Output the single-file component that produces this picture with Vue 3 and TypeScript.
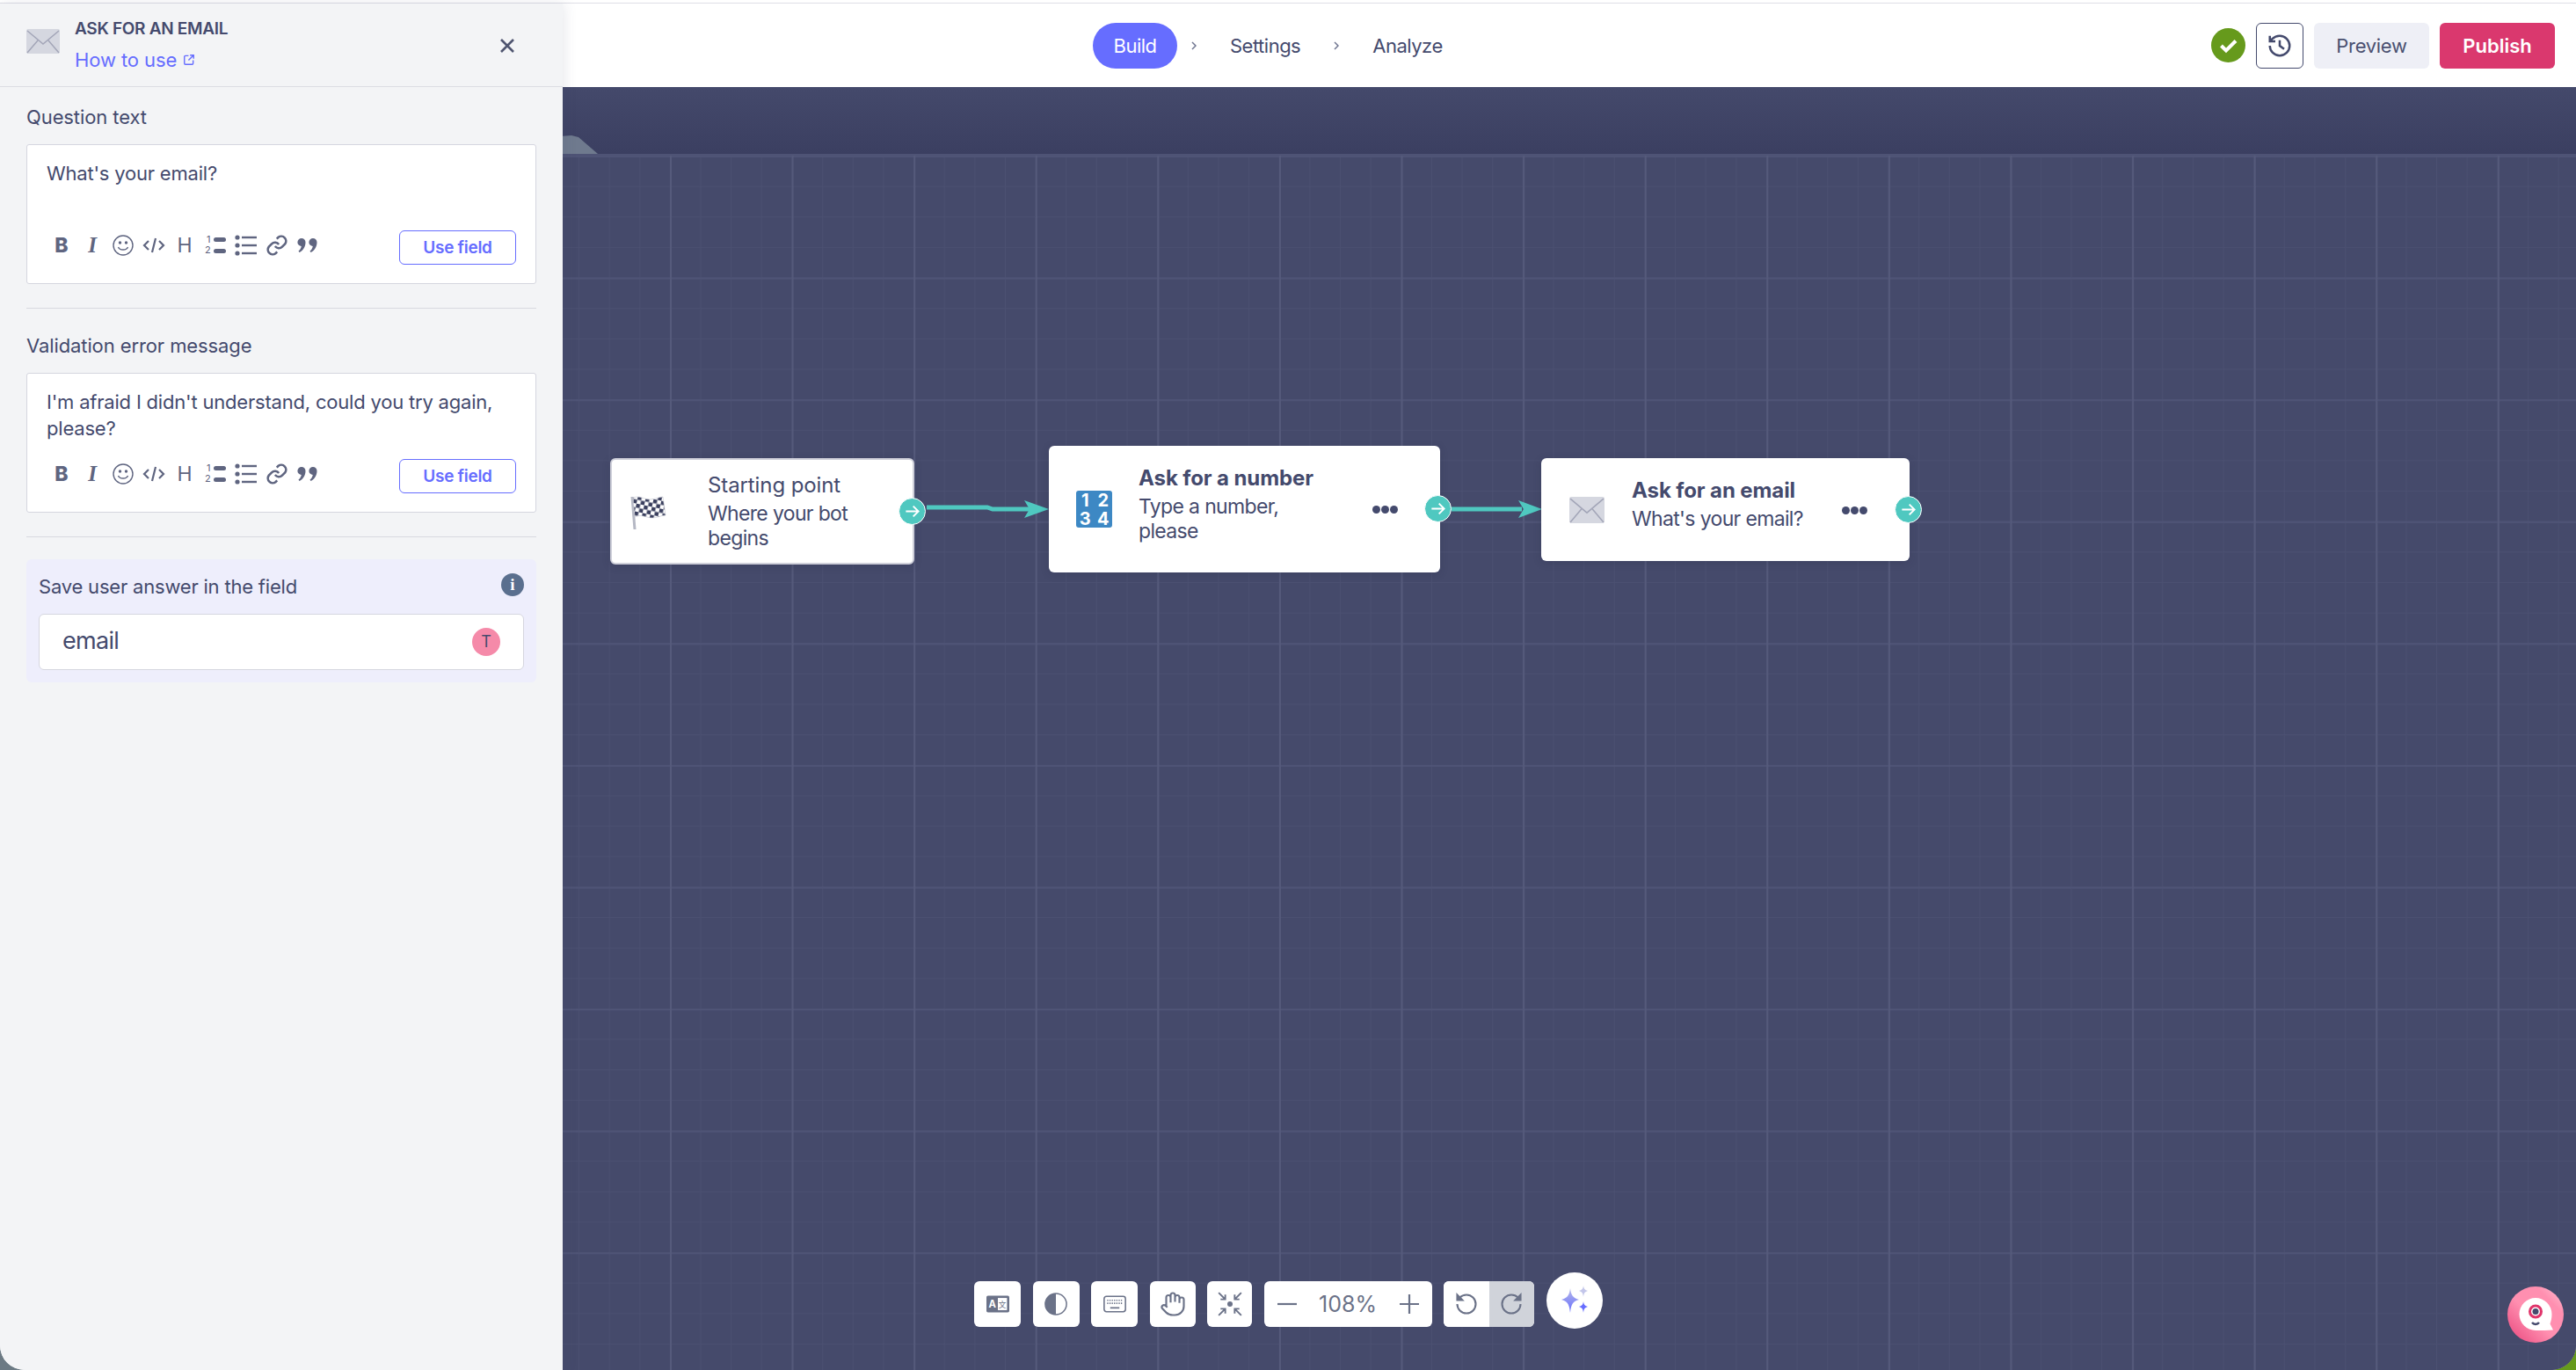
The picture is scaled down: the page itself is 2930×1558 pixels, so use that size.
<template>
  <div class="window">
    <div class="top-strip"></div>
    <div class="main">
      <aside class="panel">
        <header class="panel-head">
          <svg class="envelope" viewBox="0 0 38 28">
            <rect width="38" height="28" rx="2" fill="#d5d7e0" />
            <path d="M1 2l18 15L37 2M1 27l12-14M37 27L25 13" fill="none" stroke="#a3a6b8" stroke-width="1.5" />
          </svg>
          <div class="panel-titles">
            <div class="panel-title">ASK FOR AN EMAIL</div>
            <a class="how-to">How to use
              <svg class="ext" viewBox="0 0 24 24" fill="none" stroke="currentColor" stroke-width="2.4">
                <path d="M11 4H5a2 2 0 0 0-2 2v13a2 2 0 0 0 2 2h13a2 2 0 0 0 2-2v-6M14 3h7v7M21 3L11 13" />
              </svg>
            </a>
          </div>
          <svg class="close" viewBox="0 0 18 16" fill="none" stroke="#4f5570" stroke-width="2.6">
            <path d="M2 1l14 14M16 1L2 15" />
          </svg>
        </header>
        <div class="panel-body">
          <section v-for="ed in editors" :key="ed.label" class="field">
            <label class="field-label">{{ ed.label }}</label>
            <div class="editor">
              <div class="editor-text">{{ ed.text }}</div>
              <div class="editor-bar">
                <div class="fmt">
                  <span class="fmt-i fmt-b">B</span>
                  <span class="fmt-i fmt-it">I</span>
                  <svg class="fmt-i" viewBox="0 0 26 26" fill="none" stroke="#5f6580" stroke-width="1.4">
                    <circle cx="13" cy="13" r="11" />
                    <circle cx="9.5" cy="10" r="1" fill="#5f6580" />
                    <circle cx="16.5" cy="10" r="1" fill="#5f6580" />
                    <path d="M7.5 15c1.5 4 9.5 4 11 0" />
                  </svg>
                  <svg class="fmt-i" viewBox="0 0 26 26" fill="none" stroke="#5f6580" stroke-width="2.2">
                    <path d="M7 8l-5 5 5 5M19 8l5 5-5 5M15 5l-4 16" />
                  </svg>
                  <span class="fmt-i fmt-h">H</span>
                  <svg class="fmt-i ol" viewBox="0 0 26 26">
                    <text x="3" y="10" class="mini-num">1</text>
                    <text x="1" y="22" class="mini-num">2</text>
                    <rect x="11" y="4" width="14" height="5" rx="2.5" fill="#5f6580" />
                    <rect x="11" y="17" width="14" height="5" rx="2.5" fill="#5f6580" />
                  </svg>
                  <svg class="fmt-i" viewBox="0 0 26 26" fill="#5f6580">
                    <circle cx="3" cy="4" r="2.6" />
                    <circle cx="3" cy="13" r="2.6" />
                    <circle cx="3" cy="22" r="2.6" />
                    <rect x="8" y="2.8" width="17" height="2.4" />
                    <rect x="8" y="11.8" width="17" height="2.4" />
                    <rect x="8" y="20.8" width="17" height="2.4" />
                  </svg>
                  <svg class="fmt-i" viewBox="0 0 24 24" fill="none" stroke="#5f6580" stroke-width="2.4">
                    <path d="M10 13a5 5 0 0 0 7.5.5l3-3a5 5 0 0 0-7-7l-1.7 1.7M14 11a5 5 0 0 0-7.5-.5l-3 3a5 5 0 0 0 7 7l1.7-1.7" />
                  </svg>
                  <svg class="fmt-i" viewBox="0 0 26 26" fill="#5f6580">
                    <path d="M6 5a4.5 4.5 0 0 1 4.5 4.5C10.5 15 7.5 19 3.5 21l-1-1.5c1.7-1.3 2.8-2.8 3.3-5.5A4.5 4.5 0 0 1 6 5zM19 5a4.5 4.5 0 0 1 4.5 4.5C23.5 15 20.5 19 16.5 21l-1-1.5c1.7-1.3 2.8-2.8 3.3-5.5A4.5 4.5 0 0 1 19 5z" />
                  </svg>
                </div>
                <button class="use-field">Use field</button>
              </div>
            </div>
            <div class="divider"></div>
          </section>
          <section class="save-box">
            <div class="save-row">
              <span class="field-label save-label">Save user answer in the field</span>
              <span class="info">i</span>
            </div>
            <div class="save-input">
              <span class="save-value">email</span>
              <span class="type-badge">T</span>
            </div>
          </section>
        </div>
      </aside>

      <div class="workspace">
        <header class="topbar">
          <nav class="steps">
            <template v-for="(s, i) in steps" :key="s">
              <svg v-if="i > 0" class="chev" viewBox="0 0 6 12" fill="none" stroke="#6f7590" stroke-width="1.5">
                <path d="M1 2l4 4-4 4" />
              </svg>
              <a class="step" :class="{ active: i === 0 }">{{ s }}</a>
            </template>
          </nav>
          <div class="actions">
            <svg class="ok" viewBox="0 0 39 39">
              <circle cx="19.5" cy="19.5" r="19.5" fill="#669a1c" />
              <path d="M11.5 20l5.5 5.5 11-11" fill="none" stroke="#fff" stroke-width="4" />
            </svg>
            <button class="history">
              <svg viewBox="0 0 24 24" fill="none" stroke="#444a6d" stroke-width="2">
                <path d="M3 12a9 9 0 1 0 9-9 9.75 9.75 0 0 0-6.74 2.74L3 8M3 3v5h5M12 7v5l4 3" />
              </svg>
            </button>
            <button class="preview">Preview</button>
            <button class="publish">Publish</button>
          </div>
        </header>

        <div class="canvas">
          <div class="canvas-band"></div>
          <div class="canvas-grid"></div>
          <div class="corner-mark"></div>

          <svg class="links" viewBox="0 0 2290 1459">
            <path d="M414 478h69l6 2h45M1011 480h80" fill="none" stroke="#4fc8c0" stroke-width="5" />
            <path d="M525 470l28 10-28 10 6-10zM1087 470l27 10-27 10 6-10z" fill="#4fc8c0" />
          </svg>

          <div class="node node-start">
            <svg class="flag" viewBox="0 0 41 40">
              <defs>
                <pattern id="checks" width="9" height="9" patternUnits="userSpaceOnUse" patternTransform="rotate(12)">
                  <rect width="9" height="9" fill="#fff" />
                  <rect width="4.5" height="4.5" fill="#3a3f5e" />
                  <rect x="4.5" y="4.5" width="4.5" height="4.5" fill="#3a3f5e" />
                </pattern>
              </defs>
              <path d="M2 3l3 37" stroke="#b5b8c4" stroke-width="3" />
              <path d="M3 4c8-3 12 2 19 2 6 0 11-3 15-3l3 21c-5 0-10 3-15 3-7 0-12-5-20-1z" fill="url(#checks)" stroke="#c6c8d2" stroke-width=".6" />
            </svg>
            <div class="node-text">
              <div class="node-name">Starting point</div>
              <div class="node-sub">Where your bot begins</div>
            </div>
            <span class="port"><svg viewBox="0 0 16 16" fill="none" stroke="#fff" stroke-width="1.6"><path d="M2 8h12M9 3l5 5-5 5" /></svg></span>
          </div>

          <div class="node node-number">
            <div class="num-icon"><span>1</span><span>2</span><span>3</span><span>4</span></div>
            <div class="node-text">
              <div class="node-name strong">Ask for a number</div>
              <div class="node-sub">Type a number, please</div>
            </div>
            <div class="dots"><i></i><i></i><i></i></div>
            <span class="port"><svg viewBox="0 0 16 16" fill="none" stroke="#fff" stroke-width="1.6"><path d="M2 8h12M9 3l5 5-5 5" /></svg></span>
          </div>

          <div class="node node-email">
            <svg class="node-env" viewBox="0 0 38 28" preserveAspectRatio="none">
              <rect width="38" height="28" rx="2" fill="#d5d7e0" />
              <path d="M1 2l18 15L37 2M1 27l12-14M37 27L25 13" fill="none" stroke="#a3a6b8" stroke-width="1.5" />
            </svg>
            <div class="node-text">
              <div class="node-name strong">Ask for an email</div>
              <div class="node-sub wide">What's your email?</div>
            </div>
            <div class="dots"><i></i><i></i><i></i></div>
            <span class="port"><svg viewBox="0 0 16 16" fill="none" stroke="#fff" stroke-width="1.6"><path d="M2 8h12M9 3l5 5-5 5" /></svg></span>
          </div>

          <div class="tools">
            <button class="tool" title="Language">
              <svg viewBox="0 0 30 22">
                <rect width="30" height="22" rx="2" fill="#6b7288" />
                <rect x="15" y="3" width="12" height="16" fill="#fff" />
                <text x="3" y="16" class="lang-a">A</text>
                <text x="16" y="15.5" class="lang-b">文</text>
              </svg>
            </button>
            <button class="tool" title="Contrast">
              <svg viewBox="0 0 28 28" fill="#6b7288">
                <path d="M14 1a13 13 0 0 0 0 26z" />
                <circle cx="14" cy="14" r="13" fill="none" stroke="#6b7288" stroke-width="1.6" />
              </svg>
            </button>
            <button class="tool" title="Keyboard">
              <svg viewBox="0 0 30 22" fill="none" stroke="#6b7288" stroke-width="1.8">
                <rect x="1" y="1" width="28" height="20" rx="3" />
                <path d="M5 6h20M5 10h20" stroke-dasharray="1.5 1.5" />
                <path d="M9 16h12" stroke-width="2" />
              </svg>
            </button>
            <button class="tool narrow" title="Pan">
              <svg class="big" viewBox="0 0 24 24" fill="none" stroke="#6b7288" stroke-width="1.7">
                <path d="M18 11V6a2 2 0 0 0-4 0M14 10V4a2 2 0 0 0-4 0v2M10 10.5V6a2 2 0 0 0-4 0v8M18 8a2 2 0 1 1 4 0v6a8 8 0 0 1-8 8h-2c-2.8 0-4.5-.9-6-2.3l-3.6-3.6a2 2 0 0 1 2.8-2.8L7 15" />
              </svg>
            </button>
            <button class="tool narrower" title="Fit">
              <svg class="big" viewBox="0 0 28 28" fill="none" stroke="#6b7288" stroke-width="1.8">
                <circle cx="14" cy="14" r="2.8" fill="#6b7288" stroke="none" />
                <path d="M2 2l7 7M9 4v5H4M26 2l-7 7M19 4v5h5M2 26l7-7M9 24v-5H4M26 26l-7-7M19 24v-5h5" />
              </svg>
            </button>
            <div class="zoom">
              <svg class="zoom-btn" viewBox="0 0 22 22" stroke="#6b7288" stroke-width="2.2"><path d="M0 11h22" /></svg>
              <span>108%</span>
              <svg class="zoom-btn" viewBox="0 0 22 22" stroke="#6b7288" stroke-width="2.2"><path d="M0 11h22M11 0v22" /></svg>
            </div>
            <div class="history-pair">
              <button class="pair-btn">
                <svg viewBox="0 0 24 24" fill="none" stroke="#6b7288" stroke-width="1.8">
                  <path d="M3 12a9 9 0 1 0 9-9 9.75 9.75 0 0 0-6.74 2.74L3 8" />
                  <path d="M3 3v5h5z" fill="#6b7288" />
                </svg>
              </button>
              <button class="pair-btn off">
                <svg viewBox="0 0 24 24" fill="none" stroke="#6b7288" stroke-width="1.8">
                  <path d="M21 12a9 9 0 1 1-9-9c2.52 0 4.93 1 6.74 2.74L21 8" />
                  <path d="M21 3v5h-5z" fill="#6b7288" />
                </svg>
              </button>
            </div>
            <button class="ai">
              <svg viewBox="0 0 36 36">
                <defs>
                  <linearGradient id="spark" x1="0" y1="0" x2="0" y2="1">
                    <stop offset="0" stop-color="#b6b9e8" />
                    <stop offset="1" stop-color="#666dff" />
                  </linearGradient>
                </defs>
                <path d="M13 4c1 8 3 11 10 13-7 2-9 5-10 15-1-10-3-13-10-15 7-2 9-5 10-13z" fill="url(#spark)" />
                <path d="M28 1c.5 3.5 1.5 5 5 6-3.5 1-4.5 2.5-5 7-.5-4.5-1.5-6-5-7 3.5-1 4.5-2.5 5-6z" fill="#c3c6ea" />
                <path d="M28 19c.5 3.5 1.5 5 5 6-3.5 1-4.5 2.5-5 7-.5-4.5-1.5-6-5-7 3.5-1 4.5-2.5 5-6z" fill="#666dff" />
              </svg>
            </button>
          </div>

          <div class="help">
            <svg viewBox="0 0 64 64">
              <path d="M32 13a18.5 18.5 0 0 1 18.5 18.5c0 5-1 8-2 11l3.5 7c-6 .5-13 .5-20 .5a18.5 18.5 0 0 1 0-37z" fill="#fff" />
              <circle cx="32" cy="28.5" r="6.5" fill="none" stroke="#e0356b" stroke-width="3" />
              <circle cx="32" cy="28.5" r="3.5" fill="#444a6d" />
              <path d="M28 41c2 2.5 6 2.5 8 0" fill="none" stroke="#444a6d" stroke-width="2.5" />
            </svg>
          </div>
        </div>
      </div>
    </div>
  </div>
</template>

<script setup lang="ts">
interface EditorField {
  label: string
  text: string
}

const editors: EditorField[] = [
  { label: 'Question text', text: "What's your email?" },
  { label: 'Validation error message', text: "I'm afraid I didn't understand, could you try again, please?" },
]

const steps: string[] = ['Build', 'Settings', 'Analyze']
</script>

<style>
html, body {
  margin: 0;
  background: linear-gradient(90deg, #6c7a84 0 120px, #669a1c 120px);
}
</style>

<style scoped>
.window {
  width: 2930px;
  height: 1558px;
  display: flex;
  flex-direction: column;
  overflow: hidden;
  border-radius: 0 0 28px 28px;
  background: #fff;
  color: #444a6d;
  font-family: Inter, "Liberation Sans", sans-serif;
  font-size: 22px;
}
button {
  font-family: inherit;
  cursor: pointer;
}
.top-strip {
  height: 4px;
  flex: none;
  box-sizing: border-box;
  border-bottom: 1px solid #dedee6;
}
.main {
  flex: 1;
  display: flex;
  min-height: 0;
}

/* side panel */
.panel {
  width: 640px;
  flex: none;
  background: #f3f4f6;
  box-shadow: 2px 0 14px rgba(68, 74, 109, 0.12);
  position: relative;
  z-index: 2;
}
.panel-head {
  height: 95px;
  box-sizing: border-box;
  display: flex;
  align-items: flex-start;
  padding: 15px 54px 0 30px;
  border-bottom: 1px solid #dcdde3;
}
.envelope {
  width: 38px;
  height: 28px;
  margin-top: 14px;
  flex: none;
}
.panel-titles {
  margin-left: 17px;
}
.panel-title {
  font-size: 19px;
  font-weight: 600;
  line-height: 28px;
  letter-spacing: -0.3px;
}
.how-to {
  display: flex;
  align-items: center;
  gap: 7px;
  margin-top: 7px;
  line-height: 28px;
  letter-spacing: -0.1px;
  color: #666dff;
}
.ext {
  width: 14px;
  height: 14px;
}
.close {
  width: 18px;
  height: 16px;
  margin: 25px 0 0 auto;
}
.panel-body {
  padding: 19px 30px 0;
}
.field-label {
  display: block;
  line-height: 30px;
  letter-spacing: -0.1px;
}
.save-label {
  letter-spacing: -0.2px;
}
.editor {
  margin-top: 16px;
  height: 159px;
  box-sizing: border-box;
  display: flex;
  flex-direction: column;
  background: #fff;
  border: 1px solid #d5d6df;
  border-radius: 3px;
  padding: 17px 22px 21px 22px;
}
.editor-text {
  flex: 1;
  line-height: 30px;
  letter-spacing: -0.2px;
}
.editor-bar {
  display: flex;
  align-items: center;
  justify-content: space-between;
}
.fmt {
  display: flex;
  align-items: center;
  gap: 9px;
  padding: 0 0 6px 4px;
}
.fmt-i {
  width: 26px;
  height: 26px;
  flex: none;
  text-align: center;
  line-height: 26px;
  color: #5f6580;
}
.fmt-i.ol {
  overflow: visible;
}
.fmt-b {
  font-weight: 800;
  font-size: 23px;
}
.fmt-it {
  font-family: "Liberation Serif", serif;
  font-style: italic;
  font-weight: 700;
  font-size: 25px;
}
.fmt-h {
  font-size: 23px;
}
.mini-num {
  font-size: 11px;
  fill: #5f6580;
}
.use-field {
  width: 133px;
  height: 39px;
  background: #fff;
  border: 1px solid #666dff;
  border-radius: 6px;
  color: #666dff;
  font-size: 19px;
  font-weight: 600;
  letter-spacing: -0.3px;
  padding: 0;
}
.divider {
  height: 1px;
  margin: 27px 0;
  background: #d8d9e0;
}
.field:nth-child(2) .divider {
  margin-bottom: 25px;
}
.save-box {
  height: 140px;
  box-sizing: border-box;
  padding: 16px 14px 14px;
  background: #eeeefc;
  border-radius: 6px;
}
.save-row {
  display: flex;
  justify-content: space-between;
}
.info {
  width: 26px;
  height: 26px;
  border-radius: 50%;
  background: #5a6f8e;
  color: #fff;
  font-family: "Liberation Serif", serif;
  font-weight: 700;
  font-size: 19px;
  line-height: 26px;
  text-align: center;
}
.save-input {
  margin-top: 16px;
  height: 64px;
  box-sizing: border-box;
  display: flex;
  align-items: center;
  justify-content: space-between;
  padding: 0 26px;
  background: #fff;
  border: 1px solid #d5d6df;
  border-radius: 6px;
  font-size: 27px;
  letter-spacing: -0.7px;
}
.save-value {
  padding-bottom: 3px;
}
.type-badge {
  width: 32px;
  height: 32px;
  border-radius: 50%;
  background: #f58aa9;
  font-size: 18px;
  line-height: 32px;
  text-align: center;
  letter-spacing: 0;
}

/* top bar */
.workspace {
  flex: 1;
  min-width: 0;
  display: flex;
  flex-direction: column;
}
.topbar {
  height: 95px;
  flex: none;
  display: flex;
  align-items: center;
  padding: 0 24px 0 603px;
  box-sizing: border-box;
  background: #fff;
}
.steps {
  display: flex;
  align-items: center;
}
.step {
  padding: 0 22px;
  line-height: 52px;
  letter-spacing: -0.5px;
}
.step.active {
  width: 96px;
  box-sizing: border-box;
  padding: 0;
  text-align: center;
  background: #666dff;
  color: #fff;
  border-radius: 26px;
}
.chev {
  width: 6px;
  height: 12px;
  margin: 0 16px;
  flex: none;
}
.actions {
  margin-left: auto;
  display: flex;
  align-items: center;
  gap: 12px;
}
.ok {
  width: 39px;
  height: 39px;
}
.history {
  width: 54px;
  height: 52px;
  padding: 0;
  background: #fff;
  border: 1px solid #444a6d;
  border-radius: 6px;
  display: flex;
  align-items: center;
  justify-content: center;
}
.history svg {
  width: 30px;
  height: 30px;
}
.preview,
.publish {
  width: 131px;
  height: 52px;
  border: none;
  border-radius: 6px;
  font-size: 22px;
}
.preview {
  background: #eeeff6;
  color: #4a5070;
  letter-spacing: -0.3px;
}
.publish {
  background: #da386e;
  color: #fff;
  font-weight: 600;
}

/* canvas */
.canvas {
  flex: 1;
  position: relative;
  display: flex;
  flex-direction: column;
  overflow: hidden;
  background: #454a6b;
}
.canvas-band {
  height: 76px;
  flex: none;
  background: linear-gradient(#44496b, #3b3f61);
}
.canvas-grid {
  flex: 1;
  border-top: 2px solid #4e5375;
  background-color: #454a6b;
  background-image:
    linear-gradient(90deg, #555a7b 2px, transparent 2px),
    linear-gradient(#4f5476 2px, transparent 2px),
    linear-gradient(90deg, #4b5071 1px, transparent 1px),
    linear-gradient(#4b5071 1px, transparent 1px);
  background-size: 138.6px 138.6px, 138.6px 138.6px, 34.65px 34.65px, 34.65px 34.65px;
  background-position: 122px 0, 0 0, 18px 0, 0 0;
}
.corner-mark {
  position: absolute;
  left: 0;
  top: 55px;
  width: 40px;
  height: 21px;
  background: #6f7a8e;
  clip-path: polygon(0 4%, 25% 0, 45% 10%, 100% 100%, 0 100%);
}
.links {
  position: absolute;
  left: 0;
  top: 0;
  width: 2290px;
  height: 1459px;
}

/* nodes sit on a free canvas */
.node {
  position: absolute;
  display: flex;
  align-items: center;
  box-sizing: border-box;
  background: #fff;
  border-radius: 6px;
  box-shadow: 0 2px 8px rgba(40, 44, 70, 0.25);
}
.node-start {
  left: 54px;
  top: 422px;
  width: 346px;
  height: 121px;
  border: 2px solid #cfd0da;
  padding-left: 21px;
}
.node-number {
  left: 553px;
  top: 408px;
  width: 445px;
  height: 144px;
  padding-left: 31px;
}
.node-email {
  left: 1113px;
  top: 422px;
  width: 419px;
  height: 117px;
  padding-left: 32px;
}
.flag {
  width: 41px;
  height: 40px;
  flex: none;
}
.num-icon {
  width: 41px;
  height: 42px;
  flex: none;
  display: grid;
  grid-template-columns: 1fr 1fr;
  align-items: center;
  justify-items: center;
  background: #3d88c4;
  border-radius: 3px;
  color: #fff;
  font-weight: 700;
  font-size: 20px;
  line-height: 20px;
}
.node-env {
  width: 40px;
  height: 30px;
  flex: none;
}
.node-text {
  align-self: flex-start;
  padding-top: 23px;
}
.node-start .node-text {
  margin-left: 47px;
  padding-top: 15px;
  width: 200px;
}
.node-number .node-text {
  margin-left: 30px;
  width: 200px;
}
.node-email .node-text {
  margin-left: 31px;
}
.node-name {
  font-size: 24px;
  line-height: 28px;
  letter-spacing: -0.1px;
  white-space: nowrap;
}
.node-name.strong {
  font-weight: 700;
}
.node-sub {
  margin-top: 4px;
  font-size: 23px;
  line-height: 28px;
  letter-spacing: -0.65px;
}
.node-sub.wide {
  white-space: nowrap;
}
.dots {
  position: absolute;
  top: 50%;
  right: 48px;
  display: flex;
  gap: 1px;
  margin-top: -4px;
}
.dots i {
  width: 9px;
  height: 9px;
  border-radius: 50%;
  background: #444a6d;
}
.port {
  position: absolute;
  top: 50%;
  right: -15px;
  width: 31px;
  height: 31px;
  box-sizing: border-box;
  margin-top: -16px;
  display: flex;
  align-items: center;
  justify-content: center;
  background: #4fc8c0;
  border: 1.5px solid #fff;
  border-radius: 50%;
}
.node-number .port {
  right: -13px;
}
.node-email .port {
  right: -14px;
}
.port svg {
  width: 19px;
  height: 19px;
}

/* bottom toolbar */
.tools {
  position: absolute;
  left: 468px;
  bottom: 47px;
  display: flex;
  align-items: flex-end;
  gap: 13.5px;
}
.tool,
.zoom,
.history-pair {
  height: 52px;
  margin-bottom: 2px;
  background: #fff;
  border: none;
  border-radius: 6px;
}
.tool {
  width: 53px;
  padding: 0;
  display: flex;
  align-items: center;
  justify-content: center;
}
.tool.narrow {
  width: 52px;
}
.tool.narrower {
  width: 51px;
}
.tool svg {
  width: 26px;
  height: 26px;
}
.tool svg.big {
  width: 30px;
  height: 30px;
}
.lang-a {
  font-size: 13px;
  font-weight: 700;
  fill: #fff;
}
.lang-b {
  font-family: "Noto Sans CJK SC", sans-serif;
  font-size: 10px;
  fill: #6b7288;
}
.zoom {
  width: 191px;
  box-sizing: border-box;
  padding: 0 15px;
  display: flex;
  align-items: center;
  justify-content: space-between;
  color: #6b7288;
  font-size: 25px;
}
.zoom-btn {
  width: 22px;
  height: 22px;
  flex: none;
}
.history-pair {
  width: 103px;
  display: flex;
  overflow: hidden;
}
.pair-btn {
  flex: 1;
  padding: 0;
  border: none;
  background: #fff;
  display: flex;
  align-items: center;
  justify-content: center;
}
.pair-btn.off {
  background: #d0d3da;
}
.pair-btn svg {
  width: 28px;
  height: 28px;
}
.ai {
  width: 64px;
  height: 64px;
  padding: 0;
  border: none;
  border-radius: 50%;
  background: #fff;
  display: flex;
  align-items: center;
  justify-content: center;
}
.ai svg {
  width: 36px;
  height: 36px;
}
.help {
  position: absolute;
  right: 14px;
  bottom: 31px;
  width: 64px;
  height: 64px;
  border-radius: 50%;
  background: linear-gradient(45deg, #e8437a 0%, #ff8fb0 45%, #ff8fb0 75%, #ffc4d5 100%);
}
.help svg {
  width: 64px;
  height: 64px;
  display: block;
}
</style>
